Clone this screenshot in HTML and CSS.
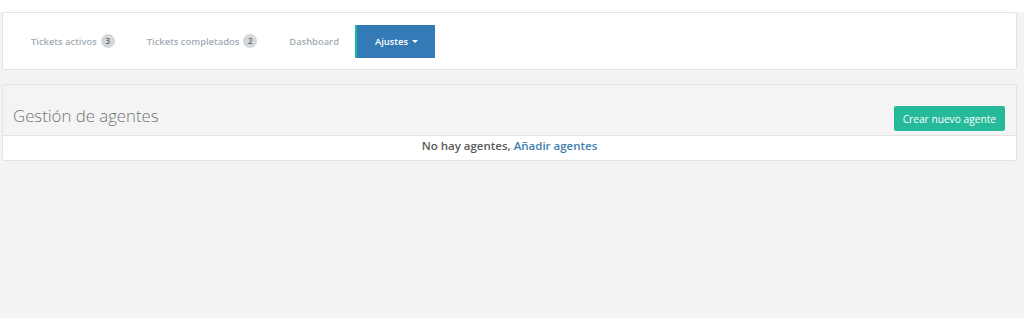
FILE: index.html
```html
<!DOCTYPE html>
<html lang="es">
<head>
  <meta charset="UTF-8" />
  <meta name="viewport" content="width=device-width, initial-scale=1.0" />
  <title>Ajustes | Agentes</title>
  <link rel="stylesheet" href="styles.css">
</head>
<body>
  <div class="top">
    <nav class="nav-panel">
      <a href="#" class="tab">Tickets activos <span class="badge">3</span></a>
      <a href="#" class="tab">Tickets completados <span class="badge">2</span></a>
      <a href="#" class="tab">Dashboard</a>
      <a href="#" class="tab tab-active">Ajustes <span class="caret"></span></a>
    </nav>
  </div>

  <div class="panel">
    <div class="panel-heading">
      <h3>Gestión de agentes</h3>
      <button class="button-success">Crear nuevo agente</button>
    </div>
    <div class="panel-body">
      No hay agentes, <a href="#">Añadir agentes</a>
    </div>
  </div>
</body>
</html>
```
FILE: styles.css
```css
body {
  margin: 0;
  font-family: 'Open Sans', sans-serif;
  background-color: #f3f3f3;
  color: #555;
  height: 318px;
}
.top {
  padding: 12px 7px 0 2px;
  background: linear-gradient(#fff 0, #fff 12px, #f3f3f3 12px);
}
.nav-panel {
  display: flex;
  align-items: center;
  height: 56px;
  padding: 0 12px;
  background: #fff;
  border: 1px solid #e3e3e3;
  border-radius: 2px;
}
.tab {
  display: flex;
  align-items: center;
  height: 33px;
  padding: 0 16px;
  font-size: 9.4px;
  font-weight: 600;
  color: #a3acb4;
  text-decoration: none;
}
.badge {
  display: inline-block;
  width: 14px;
  height: 14px;
  line-height: 14px;
  margin-left: 4px;
  border-radius: 50%;
  background: #d4d8db;
  color: #5f666c;
  font-size: 8px;
  text-align: center;
}
.tab-active {
  padding: 0 17px 0 18px;
  background: #337ab7;
  border-left: 2px solid #1abb9c;
  color: #fff;
}
.caret {
  display: inline-block;
  margin-left: 4px;
  border-top: 3px solid #fff;
  border-left: 3px solid transparent;
  border-right: 3px solid transparent;
}
.panel {
  margin: 14px 7px 0 2px;
  background: #fff;
  border: 1px solid #e3e3e3;
  border-radius: 2px;
}
.panel-heading {
  display: flex;
  align-items: flex-end;
  justify-content: space-between;
  height: 46px;
  padding: 0 11px 4px 10px;
  background: #f4f4f4;
  border-bottom: 1px solid #e3e3e3;
}
.panel-heading h3 {
  margin: 0 0 4px;
  font-size: 16.8px;
  font-weight: 300;
  color: #737373;
}
.button-success {
  height: 25px;
  padding: 0 9px;
  background: #26b99a;
  border: none;
  border-radius: 2px;
  color: #fff;
  font-family: 'Open Sans', sans-serif;
  font-size: 10.2px;
}
.panel-body {
  height: 24px;
  line-height: 20px;
  text-align: center;
  font-size: 11.5px;
  font-weight: 600;
  color: #5a5a5a;
}
.panel-body a {
  color: #3f7fae;
  text-decoration: none;
}
```
